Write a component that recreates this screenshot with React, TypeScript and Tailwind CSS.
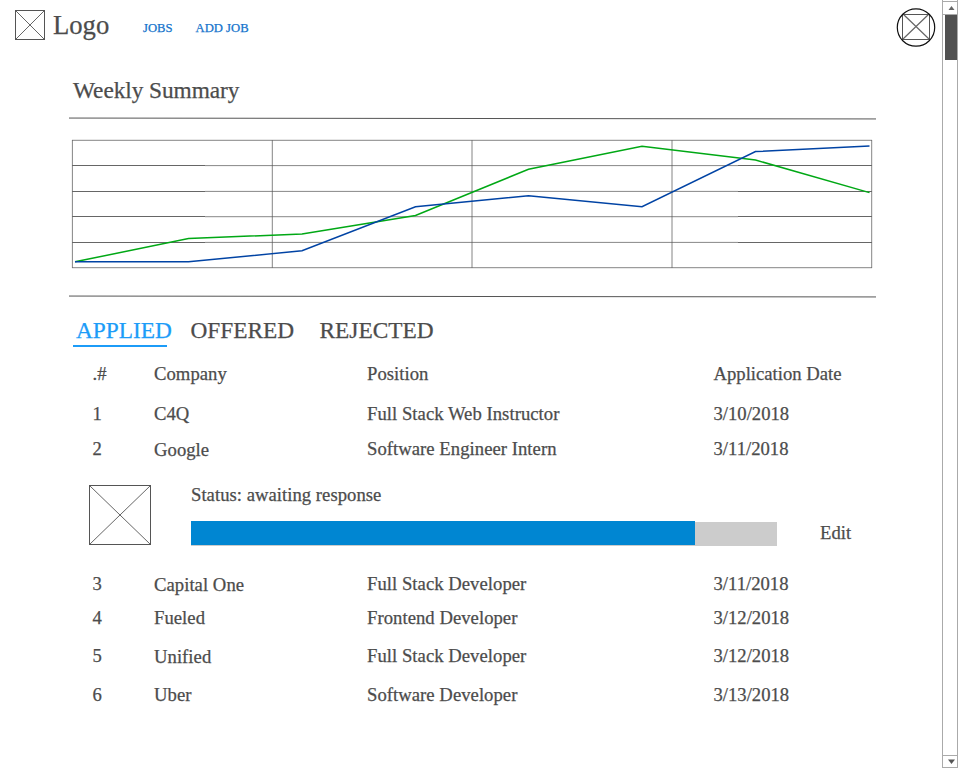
type BoxProps = { w: number; h: number; className?: string };

function Placeholder({ w, h, className }: BoxProps) {
  return (
    <svg width={w} height={h} className={className} fill="none">
      <path d={`M1 1L${w - 1} ${h - 1}M${w - 1} 1L1 ${h - 1}`} stroke="#555" strokeWidth="0.9" />
      <rect x="0.5" y="0.5" width={w - 1} height={h - 1} stroke="#555" />
    </svg>
  );
}

function Rule() {
  return (
    <svg width="807" height="3" className="block" fill="none">
      <path d="M0 1.05L807 1.95" stroke="#555" />
    </svg>
  );
}

function Chart() {
  return (
    <svg width="802" height="130" viewBox="71 139 802 130" className="ml-[2px] block" fill="none">
      <path d="M72 140.3H872M72 267.7H872" stroke="#666" strokeWidth="0.8" />
      <path d="M72.4 140V268M272.3 140V268M472 140V268M672 140V268M871.7 140V268" stroke="#666" strokeWidth="0.8" />
      <path d="M205 165.6H738M205 191.4H738M205 216.7H738M205 242.4H738" stroke="#555" strokeWidth="0.7" />
      <path d="M72 165.5H205M72 191.5H205M72 216.5H205M72 242.5H205M738 165.5H872M738 191.5H872M738 216.5H872M738 242.5H872" stroke="#666" />
      <path d="M75 261.8L188.5 238.6L302 234L415.5 215.5L528.5 169.3L642 146.3L755.5 160L869.5 192.6" stroke="#00a815" strokeWidth="1.5" />
      <path d="M75 261.8H188.5L302 250.7L415.5 206.7L528.5 195.8L642 206.7L755.5 151.6L869.5 146.1" stroke="#0043a4" strokeWidth="1.5" />
    </svg>
  );
}

type Job = { n: string; company: string; position: string; date: string; height: string; drop?: boolean };

const firstJobs: Job[] = [
  { n: ".#", company: "Company", position: "Position", date: "Application Date", height: "h-10" },
  { n: "1", company: "C4Q", position: "Full Stack Web Instructor", date: "3/10/2018", height: "h-[35px]" },
  { n: "2", company: "Google", position: "Software Engineer Intern", date: "3/11/2018", height: "h-12", drop: true },
];

const lastJobs: Job[] = [
  { n: "3", company: "Capital One", position: "Full Stack Developer", date: "3/11/2018", height: "h-[34px]", drop: true },
  { n: "4", company: "Fueled", position: "Frontend Developer", date: "3/12/2018", height: "h-[38px]" },
  { n: "5", company: "Unified", position: "Full Stack Developer", date: "3/12/2018", height: "h-[39px]", drop: true },
  { n: "6", company: "Uber", position: "Software Developer", date: "3/13/2018", height: "h-6" },
];

function Row({ job }: { job: Job }) {
  return (
    <div className={`grid grid-cols-[61.5px_213px_346.5px_1fr] pl-[23.5px] ${job.height}`}>
      <span>{job.n}</span>
      <span className={job.drop ? "pt-px tracking-[0.04px]" : "tracking-[0.04px]"}>{job.company}</span>
      <span className="tracking-[0.04px]">{job.position}</span>
      <span>{job.date}</span>
    </div>
  );
}

function Scrollbar() {
  return (
    <div className="flex h-[768px] w-4 flex-col border-x border-[#aaa]">
      <div className="mt-px flex h-[14px] items-center justify-center border-y border-[#aaa] pl-[3px]">
        <svg width="7" height="4"><path d="M3.5 0L6.5 4H.5Z" fill="#666" /></svg>
      </div>
      <div className="ml-[2px] h-[45px] w-3 bg-[#515151]" />
      <div className="flex-1" />
      <div className="flex h-[13px] items-center justify-center border-y border-[#aaa] pl-[3px]">
        <svg width="7" height="5"><path d="M0 .5H7L3.5 5Z" fill="#555" /></svg>
      </div>
    </div>
  );
}

export default function App() {
  return (
    <div className="flex h-[771px] w-[959px] overflow-hidden bg-white font-['Liberation_Serif',serif] text-[18.67px] leading-6 text-[#4c4c4c] [-webkit-text-stroke:0.25px_currentColor]">
      <div className="w-[942px] shrink-0">
        <header className="flex h-[76px] items-start pl-[15px]">
          <Placeholder w={30} h={30} className="mt-[10px]" />
          <span className="mt-[9px] ml-2 w-[90px] text-[26.67px] leading-8">Logo</span>
          <nav className="mt-5 flex text-[12.67px] leading-4 text-[#1473cc]">
            <a className="w-[52.5px]">JOBS</a>
            <a>ADD JOB</a>
          </nav>
          <svg width="40" height="40" className="mt-[7px] mr-[6px] ml-auto" fill="none">
            <path d="M7 7L33 32M33 7L7 32" stroke="#666" strokeWidth="1.2" />
            <rect x="6.5" y="7.5" width="27" height="25" stroke="#555" />
            <circle cx="20" cy="20.5" r="18.7" stroke="#111" strokeWidth="1.2" />
          </svg>
        </header>
        <main className="ml-[69px] w-[807px]">
          <h1 className="-mt-px h-[42px] pl-1 text-[23.33px] leading-[30px] tracking-[-0.06px]">Weekly Summary</h1>
          <Rule />
          <div className="pt-[19px] pb-[26px]"><Chart /></div>
          <Rule />
          <nav className="flex h-[64px] pt-[17px] pl-1 text-[23.33px] leading-[30px]">
            <div className="w-[117.5px]">
              <a className="block h-[30px] pl-[3px] text-[#1c9cf8]">APPLIED</a>
              <div className="h-[2px] w-[94px] bg-[#1c9cf8]" />
            </div>
            <a className="w-[129px]">OFFERED</a>
            <a>REJECTED</a>
          </nav>
          <section>
            {firstJobs.map((job) => <Row key={job.n} job={job} />)}
            <div className="flex h-[87px] items-start pl-5">
              <Placeholder w={62} h={60} />
              <div className="ml-10 -mt-[2px] w-[586px]">
                <div className="h-[38px] tracking-[0.03px]">Status: awaiting response</div>
                <div className="flex h-[25px] bg-[linear-gradient(white_1px,#ccc_1px)]">
                  <div className="h-6 w-[504px] bg-[#0086d2]" />
                </div>
              </div>
              <span className="mt-9 ml-[43px]">Edit</span>
            </div>
            {lastJobs.map((job) => <Row key={job.n} job={job} />)}
          </section>
        </main>
      </div>
      <Scrollbar />
    </div>
  );
}
